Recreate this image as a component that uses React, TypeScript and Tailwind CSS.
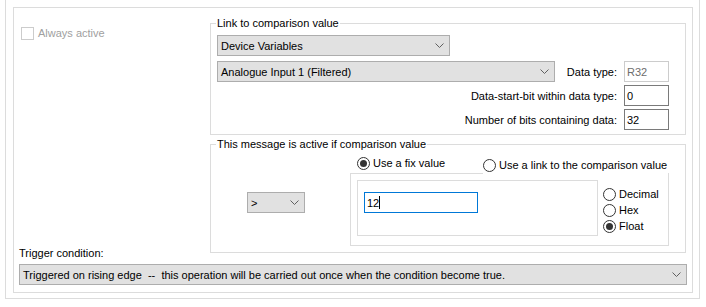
import React from "react";

function Chevron() {
  return (
    <svg width="9" height="5" viewBox="0 0 9 5" className="shrink-0" aria-hidden="true">
      <polyline points="0.5,0.5 4.5,4.5 8.5,0.5" fill="none" stroke="#606060" strokeWidth="1" />
    </svg>
  );
}

function Select({ value, className = "" }: { value: string; className?: string }) {
  return (
    <div
      className={`flex h-[21px] items-center justify-between border border-[#adadad] bg-[#e1e1e1] pl-[3px] pr-[5px] ${className}`}
    >
      <span className="whitespace-pre">{value}</span>
      <Chevron />
    </div>
  );
}

function Radio({ label, checked = false }: { label: string; checked?: boolean }) {
  return (
    <div className="flex items-center gap-[3px]">
      <span className="flex h-[13px] w-[13px] items-center justify-center rounded-full border border-[#333333] bg-white">
        {checked && <span className="h-[7px] w-[7px] rounded-full bg-[#333333]" />}
      </span>
      <span>{label}</span>
    </div>
  );
}

function TextBox({ value, disabled = false }: { value: string; disabled?: boolean }) {
  return (
    <div
      className={`flex h-[21px] w-[45px] items-center border px-[2px] ${
        disabled ? "border-[#cccccc] text-[#6d6d6d]" : "border-[#7a7a7a]"
      }`}
    >
      {value}
    </div>
  );
}

export default function App() {
  return (
    <div className="h-[307px] w-[706px] overflow-hidden bg-white font-['Liberation_Sans',Arial,sans-serif] text-[11px] leading-[14px] text-black">
      <div className="ml-[5px] h-[299px] w-[695px] border-x border-b border-[#dcdcdc] pt-[7px]">
        <div className="ml-[7px] flex h-[286px] w-[680px] flex-col border border-[#dcdcdc]">
          <div className="flex">
            <div className="flex w-[196px] flex-col justify-between pt-[18px]">
              <div className="flex items-center gap-[4px] pl-[7px] text-[#a0a0a0]">
                <span className="h-[13px] w-[13px] border border-[#cccccc] bg-white" />
                <span>Always active</span>
              </div>
              <span className="-mb-[7px] pl-[5px]">Trigger condition:</span>
            </div>

            <div className="flex w-[476px] flex-col gap-[3px] pt-[9px]">
              <fieldset className="border border-[#dcdcdc] pb-[4px] pl-[6px] pr-[16px] pt-[5px]">
                <legend className="ml-[-1px] px-px leading-[13px]">Link to comparison value</legend>
                <div className="flex flex-col gap-[3px]">
                  <Select value="Device Variables" className="mb-[2px] w-[233px]" />
                  <div className="flex items-center">
                    <Select value="Analogue Input 1 (Filtered)" className="w-[338px]" />
                    <span className="ml-auto">Data type:</span>
                    <div className="ml-[7px]">
                      <TextBox value="R32" disabled />
                    </div>
                  </div>
                  <div className="flex items-center justify-end gap-[7px]">
                    <span>Data-start-bit within data type:</span>
                    <TextBox value="0" />
                  </div>
                  <div className="flex items-center justify-end gap-[7px]">
                    <span>Number of bits containing data:</span>
                    <TextBox value="32" />
                  </div>
                </div>
              </fieldset>

              <fieldset className="border border-[#dcdcdc] pb-[6px] pl-[6px] pr-[16px] pt-[4px]">
                <legend className="ml-[-1px] px-px leading-[13px]">
                  This message is active if comparison value
                </legend>
                <div className="flex">
                  <div className="w-[133px] pl-[30px] pt-[37px]">
                    <Select value=">" className="w-[58px]" />
                  </div>
                  <div className="flex w-[319px] flex-col">
                    <div className="flex h-[18px] items-start">
                      <div className="w-[133px] pl-[7px] pt-[1px]">
                        <Radio label="Use a fix value" checked />
                      </div>
                      <div className="pt-[3px]">
                        <Radio label="Use a link to the comparison value" />
                      </div>
                    </div>
                    <div className="border-x border-b border-[#dcdcdc]">
                      <div className="h-px w-[132px] bg-[#dcdcdc]" />
                      <div className="flex pb-[9px] pl-[6px] pt-[6px]">
                        <div className="h-[56px] w-[241px] border border-[#dcdcdc] pl-[6px] pt-[11px]">
                          <div className="flex h-[21px] w-[114px] items-center border border-[#0078d7] px-[2px]">
                            12
                            <span className="h-[13px] w-px bg-black" />
                          </div>
                        </div>
                        <div className="ml-[5px] flex flex-col pt-[6px]">
                          <div className="flex h-[16px] items-center">
                            <Radio label="Decimal" />
                          </div>
                          <div className="flex h-[16px] items-center">
                            <Radio label="Hex" />
                          </div>
                          <div className="flex h-[16px] items-center">
                            <Radio label="Float" checked />
                          </div>
                        </div>
                      </div>
                    </div>
                  </div>
                </div>
              </fieldset>
            </div>
          </div>

          <div className="mx-[5px] mt-[11px]">
            <Select value="Triggered on rising edge  --  this operation will be carried out once when the condition become true." />
          </div>
        </div>
      </div>
    </div>
  );
}
